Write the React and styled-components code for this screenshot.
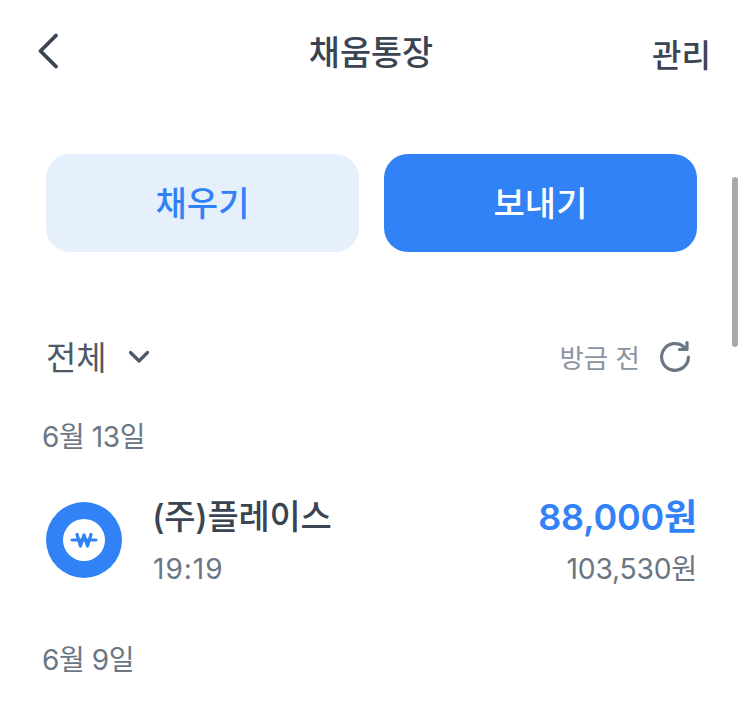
import React from 'react';
import styled, { createGlobalStyle } from 'styled-components';

const Colors = {
  ink: '#3a4452',
  body: '#4e5968',
  muted: '#6b7684',
  faint: '#8b95a1',
  blue: '#3182f6',
  lightBlue: '#e6f0fd',
};

const GlobalStyle = createGlobalStyle`
  html, body {
    margin: 0;
    background: #fff;
    overflow: hidden;
  }
  * {
    box-sizing: border-box;
  }
  body {
    font-family: Inter, "Noto Sans CJK KR", sans-serif;
  }
`;

const Page = styled.div`
  position: relative;
  width: 743px;
  height: 712px;
  overflow: hidden;
  background: #fff;
`;

const Header = styled.header`
  display: grid;
  grid-template-columns: 1fr auto 1fr;
  align-items: center;
  height: 54px;
  margin-top: 26px;
  padding: 0 32px 0 36px;
`;

const BackButton = styled.div`
  display: flex;
  align-items: center;
  height: 54px;
  svg {
    display: block;
    margin-top: -5px;
  }
`;

const Title = styled.h1`
  margin: -5px 5px 0 0;
  font-size: 33.8px;
  font-weight: 500;
  color: ${Colors.ink};
`;

const Manage = styled.div`
  justify-self: end;
  font-size: 32px;
  font-weight: 500;
  color: ${Colors.ink};
`;

const Actions = styled.div`
  display: grid;
  grid-template-columns: 313px 313px;
  gap: 25px;
  margin: 74px 0 0 46px;
`;

const ActionButton = styled.div`
  display: flex;
  align-items: center;
  justify-content: center;
  height: 98px;
  padding-bottom: 3px;
  border-radius: 24px;
  font-size: 34px;
  font-weight: 500;
  background: ${(p) => (p.$primary ? Colors.blue : Colors.lightBlue)};
  color: ${(p) => (p.$primary ? '#fff' : Colors.blue)};
`;

const FilterRow = styled.div`
  display: flex;
  align-items: center;
  justify-content: space-between;
  height: 44px;
  margin-top: 82px;
  padding: 0 52px 0 46px;
`;

const Filter = styled.div`
  display: flex;
  align-items: center;
  gap: 21px;
  font-size: 33px;
  color: ${Colors.body};
  svg {
    display: block;
    margin-top: 2px;
  }
`;

const Updated = styled.div`
  display: flex;
  align-items: center;
  gap: 19px;
  font-size: 26.5px;
  color: ${Colors.faint};
  svg {
    display: block;
  }
`;

const DateLabel = styled.div`
  padding-left: 42px;
  margin-top: ${(p) => p.$top}px;
  font-size: 28px;
  line-height: 36px;
  letter-spacing: -0.4px;
  color: ${Colors.muted};
`;

const Transaction = styled.div`
  display: grid;
  grid-template-columns: 76px 1fr auto;
  column-gap: 30px;
  align-items: center;
  margin-top: 38px;
  padding: 0 46px;
`;

const Badge = styled.div`
  display: flex;
  align-items: center;
  justify-content: center;
  width: 76px;
  height: 76px;
  border-radius: 50%;
  background: ${Colors.blue};
`;

const BadgeInner = styled.div`
  display: flex;
  align-items: center;
  justify-content: center;
  width: 42px;
  height: 42px;
  border-radius: 50%;
  background: #fff;
`;

const Stack = styled.div`
  display: flex;
  flex-direction: column;
  gap: 15px;
  padding-top: 4px;
  align-items: ${(p) => (p.$end ? 'flex-end' : 'flex-start')};
`;

const Name = styled.div`
  font-size: 34px;
  line-height: 40px;
  font-weight: 500;
  letter-spacing: -0.3px;
  color: ${Colors.ink};
`;

const Time = styled.div`
  font-size: 28px;
  line-height: 34px;
  letter-spacing: 1px;
  padding-left: 1px;
  color: ${Colors.muted};
`;

const Amount = styled.div`
  font-size: 36px;
  line-height: 40px;
  font-weight: 600;
  letter-spacing: -0.2px;
  color: ${Colors.blue};
`;

const Balance = styled.div`
  font-size: 28.2px;
  line-height: 34px;
  letter-spacing: -0.2px;
  color: ${Colors.muted};
`;

const Scrollbar = styled.div`
  position: absolute;
  top: 177px;
  right: 5px;
  width: 6px;
  height: 170px;
  border-radius: 3px;
  background: #a9a9a9;
`;

const BackIcon = () => (
  <svg width="24" height="36" viewBox="0 0 24 36" fill="none">
    <path d="M20 2.5 4.5 18 20 33.5" stroke={Colors.ink} strokeWidth="3.8" strokeLinecap="round" strokeLinejoin="round" />
  </svg>
);

const ChevronIcon = () => (
  <svg width="22" height="14" viewBox="0 0 22 14" fill="none">
    <path d="M2.5 2.5 11 11l8.5-8.5" stroke={Colors.body} strokeWidth="3.2" strokeLinecap="round" strokeLinejoin="round" />
  </svg>
);

const RefreshIcon = () => (
  <svg width="32" height="32" viewBox="0 0 32 32" fill="none">
    <path d="M25.5 7.5A13.4 13.4 0 1 0 29.4 17" stroke={Colors.muted} strokeWidth="3.2" strokeLinecap="round" />
    <path d="M28 2.5v7h-7.5" stroke={Colors.muted} strokeWidth="3.2" strokeLinecap="round" strokeLinejoin="round" />
  </svg>
);

const WonIcon = () => (
  <svg width="28" height="18" viewBox="0 0 28 18" fill="none">
    <path d="M7 3.5 10.5 15 14 4l3.5 11L21 3.5" stroke={Colors.blue} strokeWidth="3.2" strokeLinecap="round" strokeLinejoin="round" />
    <path d="M2 9h24" stroke={Colors.blue} strokeWidth="3" strokeLinecap="round" />
  </svg>
);

const App = () => (
  <Page>
    <GlobalStyle />
    <Header>
      <BackButton>
        <BackIcon />
      </BackButton>
      <Title>채움통장</Title>
      <Manage>관리</Manage>
    </Header>
    <Actions>
      <ActionButton>채우기</ActionButton>
      <ActionButton $primary>보내기</ActionButton>
    </Actions>
    <FilterRow>
      <Filter>
        전체
        <ChevronIcon />
      </Filter>
      <Updated>
        방금 전
        <RefreshIcon />
      </Updated>
    </FilterRow>
    <DateLabel $top={41}>6월 13일</DateLabel>
    <Transaction>
      <Badge>
        <BadgeInner>
          <WonIcon />
        </BadgeInner>
      </Badge>
      <Stack>
        <Name>(주)플레이스</Name>
        <Time>19:19</Time>
      </Stack>
      <Stack $end>
        <Amount>88,000원</Amount>
        <Balance>103,530원</Balance>
      </Stack>
    </Transaction>
    <DateLabel $top={56}>6월 9일</DateLabel>
    <Scrollbar />
  </Page>
);

export default App;
